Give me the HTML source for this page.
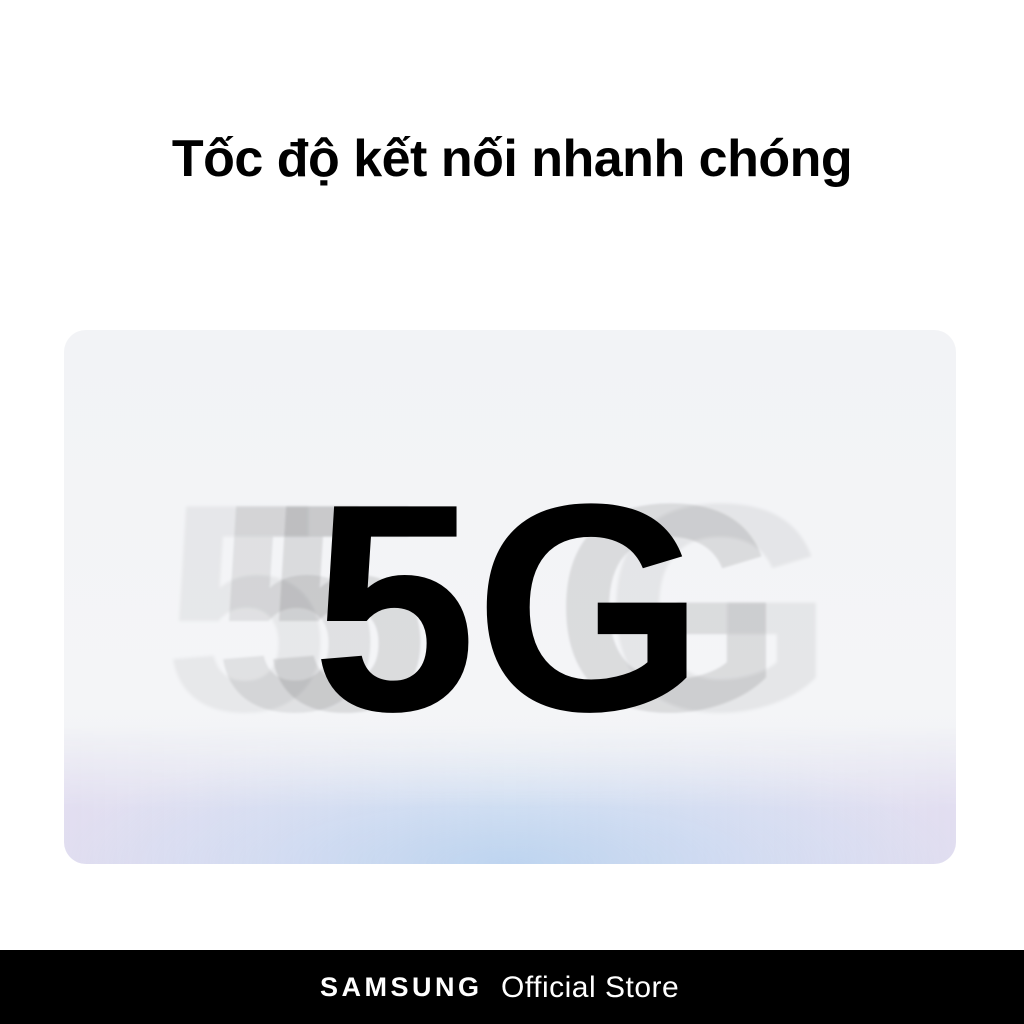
<!DOCTYPE html>
<html><head><meta charset="utf-8"><style>
html,body{margin:0;padding:0;width:1024px;height:1024px;background:#fff;overflow:hidden;position:relative;font-family:"Liberation Sans",sans-serif}
.title{position:absolute;top:129px;left:0;width:1024px;text-align:center;font-size:52px;font-weight:bold;color:#000;letter-spacing:-0.5px}
.card{position:absolute;left:64px;top:330px;width:892px;height:534px;border-radius:22px;overflow:hidden;background:linear-gradient(#f2f3f6,#f4f5f7 70%,#eef1f6)}
.glow{position:absolute;left:0;right:0;bottom:0;height:140px;background:
radial-gradient(ellipse 50% 100% at 50% 100%,rgba(160,195,235,.55),rgba(180,205,240,.3) 55%,rgba(240,242,246,0) 100%),
linear-gradient(90deg,rgba(200,185,230,.35),rgba(175,200,235,.2) 50%,rgba(200,185,230,.35));
-webkit-mask:linear-gradient(transparent,#000 60%);mask:linear-gradient(transparent,#000 60%)}
.g{position:absolute;top:130px;font-size:296px;font-weight:bold;line-height:1;letter-spacing:-2px;white-space:nowrap}
.foot{position:absolute;left:0;top:950px;width:1024px;height:74px;background:#000;color:#fff}
.sam{position:absolute;left:320px;top:22px;font-size:27px;font-weight:bold;letter-spacing:3.5px}
.off{position:absolute;left:501px;top:21px;font-size:30px;letter-spacing:0.5px}
</style></head><body>
<div class="title">Tốc độ kết nối nhanh chóng</div>
<div class="card">
<div class="glow"></div>
<div class="g" style="left:100px;color:rgba(0,0,0,.05);filter:blur(1.5px)">5</div>
<div class="g" style="left:150px;color:rgba(0,0,0,.08);filter:blur(1px)">5</div>
<div class="g" style="left:200px;color:rgba(0,0,0,.1);filter:blur(1px)">5</div>
<div class="g" style="left:540px;color:rgba(0,0,0,.06);filter:blur(1.5px)">G</div>
<div class="g" style="left:490px;color:rgba(0,0,0,.1);filter:blur(1px)">G</div>
<div class="g" style="left:248px;color:#000">5G</div>
</div>
<div class="foot"><span class="sam">SAMSUNG</span><span class="off">Official Store</span></div>
</body></html>
